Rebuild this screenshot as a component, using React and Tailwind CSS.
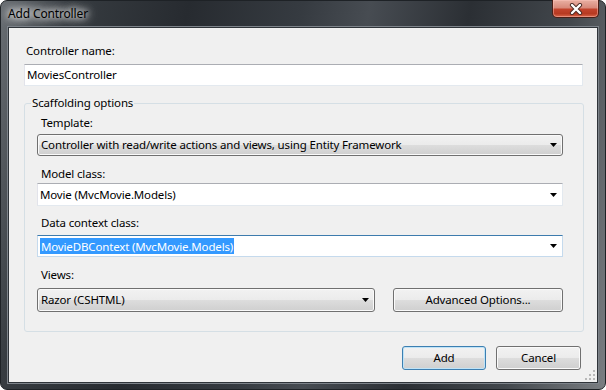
import React from 'react';

const Arrow = () => (
  <svg width="7" height="4" viewBox="0 0 7 4" className="shrink-0">
    <polygon points="0,0 7,0 3.5,4" fill="#000" />
  </svg>
);

const DropCombo = ({ text, className = '' }) => (
  <div
    className={`flex items-center justify-between rounded-[3px] border border-[#707070] bg-[linear-gradient(#f2f2f2_0%,#ebebeb_50%,#dddddd_50%,#cfcfcf_100%)] pl-[3px] pr-[5px] shadow-[inset_0_0_0_1px_#fafafa] ${className}`}
  >
    <span className="whitespace-nowrap">{text}</span>
    <Arrow />
  </div>
);

const EditCombo = ({ children, focused, className = '' }) => (
  <div
    className={`flex items-center justify-between border bg-white pl-[2px] pr-[5px] ${
      focused
        ? 'border-[#c5daed] border-t-[#3d7bad]'
        : 'border-[#e3e9ef] border-l-[#e2e3ea] border-t-[#abadb3]'
    } ${className}`}
  >
    <span className="whitespace-nowrap">{children}</span>
    <Arrow />
  </div>
);

const Button = ({ children, isDefault, className = '' }) => (
  <button
    type="button"
    className={`flex items-center justify-center rounded-[3px] border bg-[linear-gradient(#f2f2f2_0%,#ebebeb_50%,#dddddd_50%,#cfcfcf_100%)] ${
      isDefault
        ? 'border-[#3c7fb1] shadow-[inset_0_0_0_1px_#bfe3f7]'
        : 'border-[#707070] shadow-[inset_0_0_0_1px_#fafafa]'
    } ${className}`}
  >
    {children}
  </button>
);

const CloseButton = () => (
  <div className="flex h-[18px] w-[47px] items-center justify-center rounded-b-[5px] border border-t-0 border-[#4a1e16] bg-[linear-gradient(#e9b0a3_0%,#d88a7b_45%,#c2432c_55%,#b73a22_80%,#d9664a_100%)] shadow-[inset_0_0_0_1px_rgba(255,200,190,0.45)]">
    <svg width="14" height="12" viewBox="0 0 14 12">
      <path d="M3 2 L11 10 M11 2 L3 10" stroke="#4a2a24" strokeWidth="4.2" strokeLinecap="round" />
      <path d="M3 2 L11 10 M11 2 L3 10" stroke="#fff" strokeWidth="2.4" strokeLinecap="round" />
    </svg>
  </div>
);

const Grip = () => (
  <svg width="10" height="10" viewBox="0 0 10 10" className="absolute bottom-[2px] right-[2px]">
    {[
      [8, 0],
      [8, 4],
      [4, 4],
      [8, 8],
      [4, 8],
      [0, 8],
    ].map(([x, y]) => (
      <rect key={`${x}-${y}`} x={x} y={y} width="2" height="2" fill="#b8b8b8" />
    ))}
  </svg>
);

export default function App() {
  return (
    <div className="h-[390px] w-[606px] overflow-hidden bg-white font-['Noto_Sans',sans-serif] text-[11.5px] leading-[16px] tracking-[-0.15px] text-black">
      <div className="flex h-[390px] w-[606px] flex-col rounded-[7px] border border-[#1e2226] bg-[linear-gradient(100deg,#6a6f74_0%,#373c41_10%,#272b30_28%,#363b41_45%,#474c52_55%,#2b2f34_70%,#42474c_85%,#7a7e82_100%)]">
        {/* title bar */}
        <div className="flex h-[26px] shrink-0 items-start justify-between">
          <span className="ml-[7px] mt-[5px] text-[12px] [text-shadow:0_0_6px_#fff,0_0_10px_#fff,0_0_14px_#fff]">
            Add Controller
          </span>
          <div className="mr-[6px] -mt-px">
            <CloseButton />
          </div>
        </div>

        {/* client area */}
        <div className="relative mx-[7px] flex h-[356px] flex-col border border-[#2f3439] bg-[#f0f0f0] pl-[15px] pr-[15px] shadow-[0_0_0_1px_#7d838a]">
          <label className="ml-[2px] mt-[15px]">Controller name:</label>
          <div className="mt-[5px] flex h-[22px] w-[559px] items-center border border-[#e3e9ef] border-l-[#e2e3ea] border-t-[#abadb3] bg-white pl-[2px]">
            MoviesController
          </div>

          <fieldset className="mt-[9px] w-[560px] rounded-[3px] border border-[#d5dfe5] pb-[19px]">
            <legend className="ml-[6px] px-[1px]">Scaffolding options</legend>

            <div className="pl-[12px]">
              <div className="ml-[4px] mt-[4px]">Template:</div>
              <DropCombo
                className="mt-[3px] h-[22px] w-[526px]"
                text="Controller with read/write actions and views, using Entity Framework"
              />

              <div className="ml-[4px] mt-[10px]">Model class:</div>
              <EditCombo className="mt-[1px] h-[23px] w-[526px]">Movie (MvcMovie.Models)</EditCombo>

              <div className="ml-[4px] mt-[9px]">Data context class:</div>
              <EditCombo focused className="mt-[4px] h-[22px] w-[526px]">
                <span className="bg-[#3399ff] px-px py-[0.5px] text-white">MovieDBContext (MvcMovie.Models)</span>
              </EditCombo>

              <div className="ml-[4px] mt-[10px]">Views:</div>
              <div className="mt-[5px] flex items-center gap-[18px]">
                <DropCombo className="h-[24px] w-[338px]" text="Razor (CSHTML)" />
                <Button className="h-[24px] w-[170px]">Advanced Options...</Button>
              </div>
            </div>
          </fieldset>

          <div className="mt-[14px] flex justify-end gap-[10px] pr-px">
            <Button isDefault className="h-[24px] w-[84px]">
              Add
            </Button>
            <Button className="h-[24px] w-[85px]">Cancel</Button>
          </div>
          <Grip />
        </div>
      </div>
    </div>
  );
}
